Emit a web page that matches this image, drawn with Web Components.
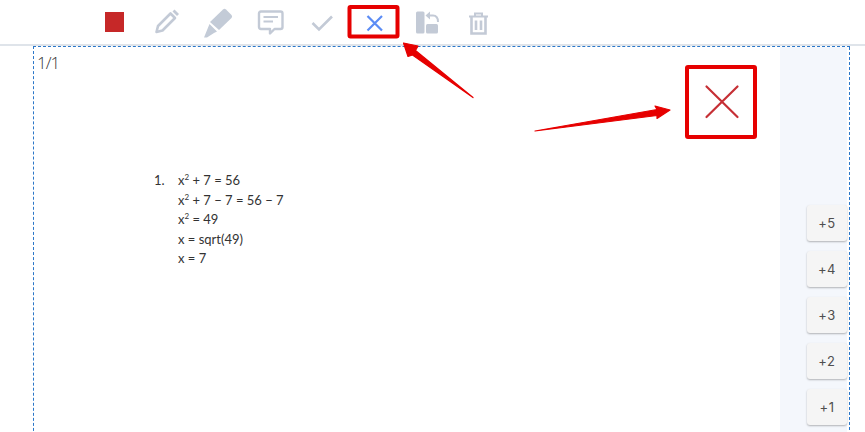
<!DOCTYPE html>
<html>
<head>
<meta charset="utf-8">
<title>Grading</title>
<style>
html,body{margin:0;padding:0;background:#fff;}
body{width:865px;height:432px;overflow:hidden;position:relative;font-family:"Open Sans",sans-serif;}
</style>
</head>
<body>
<grade-page></grade-page>
<script>
const ICONS = {
  pencil: '<path d="M5.5 25 L7 19 L19.5 6.5 L24 11 L11.5 23.5 Z" fill="none" stroke="#c3cad6" stroke-width="2.6" stroke-linejoin="round"/><path d="M21.5 4.5 L23.5 2.5 L28 7 L26 9 Z" fill="#c3cad6"/>',
  marker: '<path d="M9 17 L22 4.5 Q23.5 3.2 25 4.5 L30.5 10 Q31.8 11.5 30.5 13 L18 25 Z" fill="#c3cbd7"/><path d="M8.5 19 L16 26.5 L13 28 L6 32.5 H3 Z" fill="#c3cbd7"/>',
  comment: '<path d="M6 4.5 H25.5 Q27.5 4.5 27.5 6.5 V20 Q27.5 22 25.5 22 H19.5 L15 26.5 V22 H6 Q4 22 4 20 V6.5 Q4 4.5 6 4.5 Z" fill="none" stroke="#c3cad6" stroke-width="2.4" stroke-linejoin="round"/><path d="M8.5 10 H23 M8.5 14.5 H18" stroke="#c3cad6" stroke-width="2.2" fill="none"/>',
  check: '<path d="M4.5 15 L11 21.5 L24 8.5" fill="none" stroke="#c3cad6" stroke-width="2.6"/>',
  cross: '<path d="M6.5 7 L21 21.5 M21 7 L6.5 21.5" fill="none" stroke="#5b8cf5" stroke-width="2.2"/>',
  rotate: '<rect x="3" y="2.5" width="8.5" height="22" rx="1.5" fill="#c3cad6"/><rect x="13" y="15" width="12" height="9.5" rx="1.5" fill="#c3cad6"/><path d="M15 6.5 H20 Q25 6.5 25 13" fill="none" stroke="#c3cad6" stroke-width="2"/><path d="M17 2.5 L12.5 6.5 L17 10.5 Z" fill="#c3cad6"/>',
  trash: '<path d="M3 6.5 H22 M9 6 V3.5 H16 V6" fill="none" stroke="#c3cad6" stroke-width="2"/><path d="M5.5 7 V23.5 H19.5 V7 M10 10.5 V20 M15 10.5 V20" fill="none" stroke="#c3cad6" stroke-width="2.6"/>'
};

class ToolIcon extends HTMLElement {
  connectedCallback() {
    const sh = this.attachShadow({ mode: 'open' });
    const name = this.getAttribute('name');
    const size = this.getAttribute('size') || 30;
    sh.innerHTML = `<style>
      :host{display:flex;width:52px;height:44px;align-items:center;justify-content:center;}
      svg{display:block;}
      .swatch{width:19px;height:20px;margin-left:1px;background:#c62828;}
    </style>` + (name === 'color'
      ? '<div class="swatch"></div>'
      : `<svg width="${size}" height="${size}" viewBox="0 0 ${size} ${size}">${ICONS[name]}</svg>`);
  }
}
customElements.define('tool-icon', ToolIcon);

class ToolBar extends HTMLElement {
  connectedCallback() {
    const sh = this.attachShadow({ mode: 'open' });
    sh.innerHTML = `<style>
      :host{display:flex;height:44px;padding-left:88px;border-bottom:2px solid #dfe4ea;background:#fff;}
    </style><slot></slot>`;
  }
}
customElements.define('tool-bar', ToolBar);

class ScoreButton extends HTMLElement {
  connectedCallback() {
    const sh = this.attachShadow({ mode: 'open' });
    sh.innerHTML = `<style>
      :host{display:flex;width:40px;height:36px;align-items:center;justify-content:center;background:#f5f5f5;border-radius:3px;
        box-shadow:0 1px 2px rgba(0,0,0,.28);font:13px Inter,Roboto,sans-serif;letter-spacing:.6px;color:#4f4f4f;}
    </style><slot></slot>`;
  }
}
customElements.define('score-button', ScoreButton);

class ScorePanel extends HTMLElement {
  connectedCallback() {
    const sh = this.attachShadow({ mode: 'open' });
    sh.innerHTML = `<style>
      :host{display:flex;flex-direction:column;gap:10px;box-sizing:border-box;width:67px;background:#f4f7fc;padding:158px 0 0 27px;}
    </style><slot></slot>`;
  }
}
customElements.define('score-panel', ScorePanel);

class AnswerSheet extends HTMLElement {
  connectedCallback() {
    const sh = this.attachShadow({ mode: 'open' });
    sh.innerHTML = `<style>
      :host{display:flex;flex:1;min-width:0;flex-direction:column;font-family:Lato,"Liberation Sans",sans-serif;color:#333;}
      .page{font:300 17px/20px "Open Sans",sans-serif;color:#333;padding:6px 0 0 3px;height:118px;letter-spacing:-1px;}
      .answer{display:flex;font-size:13px;line-height:19.5px;padding-left:120px;}
      .num{width:24px;}
      sup{font-size:8px;line-height:0;}
    </style>
    <div class="page">1/1</div>
    <div class="answer">
      <div class="num">1.</div>
      <div>
        <div>x<sup>2</sup> + 7 = 56</div>
        <div>x<sup>2</sup> + 7 &minus; 7 = 56 &minus; 7</div>
        <div>x<sup>2</sup> = 49</div>
        <div>x = sqrt(49)</div>
        <div>x = 7</div>
      </div>
    </div>`;
  }
}
customElements.define('answer-sheet', AnswerSheet);

class MarkCallouts extends HTMLElement {
  connectedCallback() {
    const sh = this.attachShadow({ mode: 'open' });
    sh.innerHTML = `<style>
      :host{position:absolute;left:0;top:0;width:865px;height:432px;pointer-events:none;}
      svg{position:absolute;left:0;top:0;}
    </style>
    <svg width="865" height="432" viewBox="0 0 865 432">
      <rect x="349.5" y="7" width="48" height="29.5" rx="1" fill="none" stroke="#e60000" stroke-width="4"/>
      <rect x="687" y="67" width="68" height="70" rx="1" fill="none" stroke="#e60000" stroke-width="4"/>
      <path d="M706.5 86.5 L737.5 117 M737.5 86.5 L706.5 117" fill="none" stroke="#c62f35" stroke-width="2.2" stroke-linecap="round"/>
      <path d="M403.5 43 L418 46 L415.5 50.5 L473 97.5 L412.5 55 L408 56.5 Z" fill="#e60000" stroke="#e60000" stroke-width="1.2" stroke-linejoin="round"/>
      <path d="M670 110 L655 106 L657 109.5 L535 131 L657 115.5 L657 118.5 Z" fill="#e60000" stroke="#e60000" stroke-width="1.2" stroke-linejoin="round"/>
    </svg>`;
  }
}
customElements.define('mark-callouts', MarkCallouts);

class GradePage extends HTMLElement {
  connectedCallback() {
    const sh = this.attachShadow({ mode: 'open' });
    sh.innerHTML = `<style>
      :host{display:block;position:relative;width:865px;height:432px;overflow:hidden;}
      .wrap{height:386px;padding:0 15px 0 33px;}
      .canvas{display:flex;box-sizing:border-box;height:400px;border:1px dashed #2b77c9;border-right:0;width:817px;padding-right:3px;position:relative;}
      .edge{position:absolute;right:0;top:0;bottom:0;width:0;border-right:1px dashed #2b77c9;}
    </style>
    <tool-bar>
      <tool-icon name="color"></tool-icon>
      <tool-icon name="pencil"></tool-icon>
      <tool-icon name="marker" size="34"></tool-icon>
      <tool-icon name="comment"></tool-icon>
      <tool-icon name="check" size="28"></tool-icon>
      <tool-icon name="cross" size="27"></tool-icon>
      <tool-icon name="rotate" size="26"></tool-icon>
      <tool-icon name="trash" size="25"></tool-icon>
    </tool-bar>
    <div class="wrap">
      <div class="canvas">
        <answer-sheet></answer-sheet>
        <score-panel>
          <score-button>+5</score-button>
          <score-button>+4</score-button>
          <score-button>+3</score-button>
          <score-button>+2</score-button>
          <score-button>+1</score-button>
        </score-panel>
        <div class="edge"></div>
      </div>
    </div>
    <mark-callouts></mark-callouts>`;
  }
}
customElements.define('grade-page', GradePage);
</script>
</body>
</html>
